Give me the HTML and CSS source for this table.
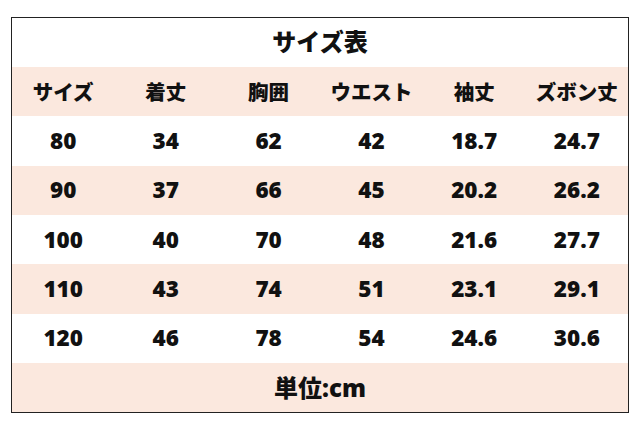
FILE: index.html
```html
<!DOCTYPE html>
<html lang="ja">
<head>
<meta charset="utf-8">
<link rel="stylesheet" href="styles.css">
</head>
<body>
<table class="size-table">
  <tr class="row row-white"><td class="title" colspan="6">サイズ表</td></tr>
  <tr class="row row-peach head">
    <td>サイズ</td><td>着丈</td><td>胸囲</td><td>ウエスト</td><td>袖丈</td><td>ズボン丈</td>
  </tr>
  <tr class="row row-white"><td>80</td><td>34</td><td>62</td><td>42</td><td>18.7</td><td>24.7</td></tr>
  <tr class="row row-peach"><td>90</td><td>37</td><td>66</td><td>45</td><td>20.2</td><td>26.2</td></tr>
  <tr class="row row-white"><td>100</td><td>40</td><td>70</td><td>48</td><td>21.6</td><td>27.7</td></tr>
  <tr class="row row-peach"><td>110</td><td>43</td><td>74</td><td>51</td><td>23.1</td><td>29.1</td></tr>
  <tr class="row row-white"><td>120</td><td>46</td><td>78</td><td>54</td><td>24.6</td><td>30.6</td></tr>
  <tr class="row row-peach"><td class="title" colspan="6">単位:cm</td></tr>
</table>
</body>
</html>
```
FILE: styles.css
```css
html, body {
  margin: 0;
  padding: 0;
  background: #ffffff;
}
body {
  padding: 17px 11px 0 11px;
}
.size-table {
  width: 618px;
  height: 395px;
  border-collapse: collapse;
  border: 1px solid #222222;
  table-layout: fixed;
  font-family: "Open Sans", "Noto Sans CJK JP", sans-serif;
  font-weight: 800;
  color: #111111;
}
.row {
  height: 49.4px;
}
.row-white { background: #ffffff; }
.row-peach { background: #fbe8de; }
.size-table td {
  padding: 0;
  text-align: center;
  vertical-align: middle;
  font-size: 22.5px;
  line-height: 1;
}
.size-table .head td {
  font-family: "Noto Sans CJK JP", sans-serif;
  font-weight: 900;
  font-size: 20.5px;
}
.size-table .title {
  font-family: "Open Sans", "Noto Sans CJK JP", sans-serif;
  font-size: 24px;
}
```
